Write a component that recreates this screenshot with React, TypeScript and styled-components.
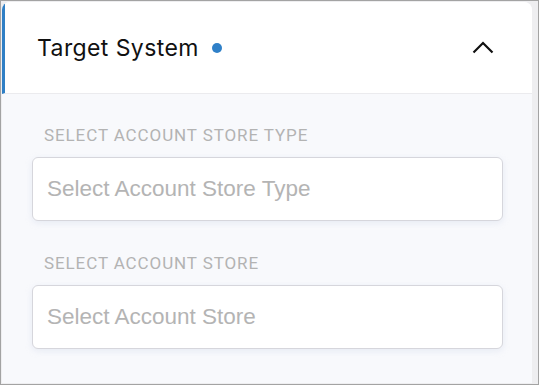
import React from "react";
import styled, { createGlobalStyle } from "styled-components";

const Global = createGlobalStyle`
  html, body { margin: 0; padding: 0; background: #ffffff; }
  * { box-sizing: border-box; }
`;

const Frame = styled.div`
  width: 539px;
  height: 385px;
  border: 1px solid #a3a3a3;
  background: #eeeef0;
  padding: 1px 6px 1px 1px;
  display: flex;
`;

const Card = styled.section`
  flex: 1;
  display: flex;
  flex-direction: column;
  background: #f8f9fc;
  border-radius: 8px 8px 0 0;
  overflow: hidden;
`;

const Header = styled.div`
  height: 92px;
  flex: none;
  display: flex;
  align-items: center;
  justify-content: space-between;
  background: #ffffff;
  border-left: 3px solid #2f7fc5;
  border-bottom: 1px solid #ebebee;
  padding: 0 38px 0 32px;
`;

const TitleRow = styled.div`
  display: flex;
  align-items: center;
  gap: 13px;
`;

const Title = styled.h2`
  margin: 0;
  font-family: "Inter", "Liberation Sans", sans-serif;
  font-weight: 400;
  font-size: 23px;
  color: #111111;
  letter-spacing: 0.4px;
`;

const Dot = styled.span`
  width: 10px;
  height: 10px;
  border-radius: 50%;
  background: #2f80c8;
  margin-top: 1px;
`;

const Body = styled.div`
  padding: 31px 29px 0 30px;
  display: flex;
  flex-direction: column;
`;

const Field = styled.div`
  display: flex;
  flex-direction: column;
  margin-bottom: 32px;
`;

const Label = styled.label`
  font-family: "Roboto", "Liberation Sans", sans-serif;
  font-size: 17px;
  color: #b3b3b3;
  padding-left: 12px;
  letter-spacing: 0.9px;
  line-height: 20px;
  margin-bottom: 12px;
  white-space: nowrap;
`;

const SelectBox = styled.div`
  height: 64px;
  background: #ffffff;
  border: 1px solid #d6d6dc;
  border-radius: 6px;
  box-shadow: 0 2px 6px rgba(200, 210, 230, 0.35);
  display: flex;
  align-items: center;
  padding-left: 14px;
  font-family: "Liberation Sans", Arial, sans-serif;
  font-size: 22.5px;
  color: #b4b4b4;
`;

const Chevron = () => (
  <svg width="22" height="13" viewBox="0 0 22 13" fill="none">
    <path d="M1.5 11.5 L11 2 L20.5 11.5" stroke="#111" strokeWidth="2.2" />
  </svg>
);

export default function App() {
  return (
    <>
      <Global />
      <Frame>
        <Card>
          <Header>
            <TitleRow>
              <Title>Target System</Title>
              <Dot />
            </TitleRow>
            <Chevron />
          </Header>
          <Body>
            <Field>
              <Label>SELECT ACCOUNT STORE TYPE</Label>
              <SelectBox>Select Account Store Type</SelectBox>
            </Field>
            <Field>
              <Label>SELECT ACCOUNT STORE</Label>
              <SelectBox>Select Account Store</SelectBox>
            </Field>
          </Body>
        </Card>
      </Frame>
    </>
  );
}
